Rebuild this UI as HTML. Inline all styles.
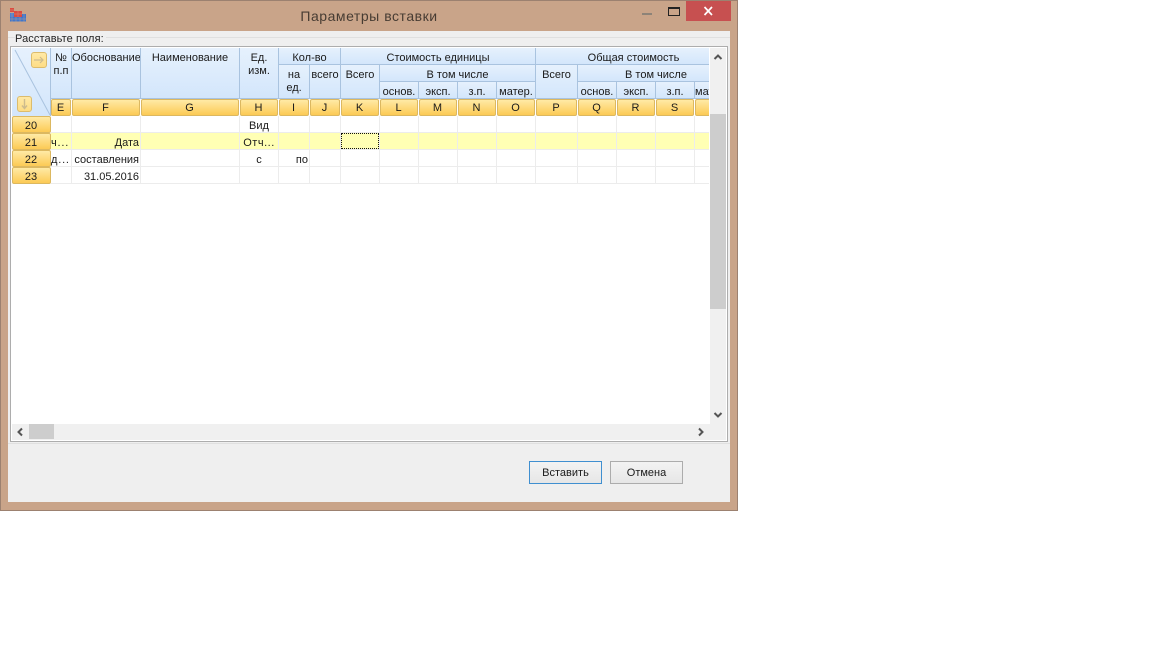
<!DOCTYPE html>
<html><head><meta charset="utf-8"><style>
html,body{margin:0;padding:0;background:#fff;width:1152px;height:648px;overflow:hidden}
body{position:relative;font-family:"Liberation Sans","DejaVu Sans",sans-serif;font-size:11px;color:#1a1a1a}
div{position:absolute;box-sizing:border-box}
.h{background:linear-gradient(#e6f1fd,#d3e6fb);border-right:1px solid #a9c3df;border-bottom:1px solid #a9c3df;text-align:center;line-height:13.500px;white-space:nowrap;overflow:hidden;padding-top:3.500px}
.l{top:99px;height:17px;padding-right:1px;background:linear-gradient(#ffeaa6,#fcca55);border:1px solid #dcb860;border-radius:2px;text-align:center;line-height:17px;overflow:hidden}
.r{left:12px;width:39px;height:17px;padding-right:1px;background:linear-gradient(#ffeaa6,#fcca55);border:1px solid #dcb860;border-radius:2px;text-align:center;line-height:18px}
.v{top:116px;width:1px;height:68px;background:#ececec}
.g{left:51px;width:658px;height:1px;background:#ececec}
.c{height:17px;line-height:20px;white-space:nowrap;overflow:hidden}
.b{top:461px;height:23px;text-align:center;line-height:23px;background:linear-gradient(#f3f3f3,#e6e6e6);border:1px solid #acacac}
.ab{background:linear-gradient(#ffe9a6,#fedd85);border:1px solid #dcbc6c;border-radius:3px}
</style></head><body>
<div style="left:0;top:0;width:738px;height:511px;background:#c9a489;border:1px solid #9c8170"></div>
<svg style="position:absolute;left:10px;top:8px" width="17" height="14"><path d="M0 0h4v4H0zM4 3h8v6H4z" fill="#dc4a40"/><path d="M0 5h4v4H0z" fill="#4d80d0"/><path d="M0 9h16v4.500H0zM12 6h4v3h-4z" fill="#3f76cc"/><path d="M0 2h4M4 6h8M8 3v6M2 5v8.500M6 9v4.500M10 9v4.500M14 6v7.500M0 11h16" stroke="#c9a489" stroke-width=".7" fill="none" opacity=".6"/></svg>
<div style="left:0;top:8px;width:738px;text-align:center;font-size:14px;letter-spacing:.53px;color:#473c33;line-height:16px">Параметры вставки</div>
<div style="left:642px;top:13px;width:10px;height:2px;background:#8d8378"></div>
<div style="left:668px;top:7px;width:12px;height:9px;border:1px solid #222;border-top-width:2px"></div>
<div style="left:686px;top:1px;width:45px;height:20px;background:#c75050"></div>
<svg style="position:absolute;left:703px;top:6px" width="11" height="10"><path d="M1.500 1l7.500 8M9 1L1.500 9" stroke="#fff" stroke-width="1.700" fill="none"/></svg>

<div style="left:8px;top:31px;width:722px;height:471px;background:#efefef"></div>
<div style="left:8px;top:37px;width:722px;height:1px;background:#e0e0e0"></div>
<div style="left:8px;top:443px;width:722px;height:1px;background:#e0e0e0"></div>
<div style="left:15px;top:33px;line-height:13px;background:#efefef;padding-right:2px;letter-spacing:.1px;color:#222">Расставьте поля:</div>
<div style="left:10px;top:46px;width:718px;height:396px;background:#fff;border:1px solid #adadad"></div>
<div style="left:12px;top:48px;width:714px;height:392px;background:#fff"></div>

<div style="left:12px;top:48px;width:39px;height:68px;background:linear-gradient(#e6f1fd,#d3e6fb);border-right:1px solid #a9c3df"></div>
<svg style="position:absolute;left:12px;top:48px" width="40" height="68"><path d="M3 2L38 67" stroke="#a9c3df" fill="none"/></svg>
<div class="ab" style="left:31px;top:52px;width:16px;height:16px"></div>
<svg style="position:absolute;left:31px;top:52px" width="16" height="16"><path d="M3 8h9M9 5l3 3-3 3" stroke="#cdbb8e" stroke-width="1.200" fill="none"/></svg>
<div class="ab" style="left:17px;top:96px;width:15px;height:16px"></div>
<svg style="position:absolute;left:17px;top:96px" width="15" height="16"><path d="M7.500 3v9M5 9.500l2.500 3 2.500-3" stroke="#cdbb8e" stroke-width="1.400" fill="none"/></svg>

<div class="h" style="left:51px;top:48px;width:21px;height:51px">№<br>п.п</div>
<div class="h" style="left:72px;top:48px;width:69px;height:51px">Обоснование</div>
<div class="h" style="left:141px;top:48px;width:99px;height:51px">Наименование</div>
<div class="h" style="left:240px;top:48px;width:39px;height:51px">Ед.<br>изм.</div>
<div class="h" style="left:279px;top:48px;width:62px;height:17px">Кол-во</div>
<div class="h" style="left:279px;top:65px;width:31px;height:34px">на<br>ед.</div>
<div class="h" style="left:310px;top:65px;width:31px;height:34px">всего</div>
<div class="h" style="left:341px;top:48px;width:195px;height:17px">Стоимость единицы</div>
<div class="h" style="left:341px;top:65px;width:39px;height:34px">Всего</div>
<div class="h" style="left:380px;top:65px;width:156px;height:17px">В том числе</div>
<div class="h" style="left:380px;top:82px;width:39px;height:17px">основ.</div>
<div class="h" style="left:419px;top:82px;width:39px;height:17px">эксп.</div>
<div class="h" style="left:458px;top:82px;width:39px;height:17px">з.п.</div>
<div class="h" style="left:497px;top:82px;width:39px;height:17px">матер.</div>
<div class="h" style="left:536px;top:48px;width:173px;height:17px;border-right:0;padding-left:22px">Общая стоимость</div>
<div class="h" style="left:536px;top:65px;width:42px;height:34px">Всего</div>
<div class="h" style="left:578px;top:65px;width:131px;height:17px;border-right:0;padding-left:25px">В том числе</div>
<div class="h" style="left:578px;top:82px;width:39px;height:17px">основ.</div>
<div class="h" style="left:617px;top:82px;width:39px;height:17px">эксп.</div>
<div class="h" style="left:656px;top:82px;width:39px;height:17px">з.п.</div>
<div class="h" style="left:695px;top:82px;width:14px;height:17px;border-right:0;text-align:left">матер.</div>

<div class="l" style="left:51px;width:20px">E</div>
<div class="l" style="left:72px;width:68px">F</div>
<div class="l" style="left:141px;width:98px">G</div>
<div class="l" style="left:240px;width:38px">H</div>
<div class="l" style="left:279px;width:30px">I</div>
<div class="l" style="left:310px;width:30px">J</div>
<div class="l" style="left:341px;width:38px">K</div>
<div class="l" style="left:380px;width:38px">L</div>
<div class="l" style="left:419px;width:38px">M</div>
<div class="l" style="left:458px;width:38px">N</div>
<div class="l" style="left:497px;width:38px">O</div>
<div class="l" style="left:536px;width:41px">P</div>
<div class="l" style="left:578px;width:38px">Q</div>
<div class="l" style="left:617px;width:38px">R</div>
<div class="l" style="left:656px;width:38px">S</div>
<div class="l" style="left:695px;width:14px;border-right:0;border-radius:2px 0 0 2px"></div>

<div class="r" style="top:116px">20</div>
<div class="r" style="top:133px">21</div>
<div class="r" style="top:150px">22</div>
<div class="r" style="top:167px">23</div>

<div style="left:51px;top:133px;width:658px;height:17px;background:#ffffb4"></div>
<div class="g" style="top:132px"></div><div class="g" style="top:149px"></div><div class="g" style="top:166px"></div><div class="g" style="top:183px"></div>
<div class="v" style="left:71px"></div><div class="v" style="left:140px"></div><div class="v" style="left:239px"></div><div class="v" style="left:278px"></div><div class="v" style="left:309px"></div><div class="v" style="left:340px"></div><div class="v" style="left:379px"></div><div class="v" style="left:418px"></div><div class="v" style="left:457px"></div><div class="v" style="left:496px"></div><div class="v" style="left:535px"></div><div class="v" style="left:577px"></div><div class="v" style="left:616px"></div><div class="v" style="left:655px"></div><div class="v" style="left:694px"></div>

<div class="c" style="left:240px;top:116px;width:38px;text-align:center">Вид</div>
<div class="c" style="left:51px;top:133px;width:20px;letter-spacing:.8px">ч...</div>
<div class="c" style="left:72px;top:133px;width:67px;text-align:right">Дата</div>
<div class="c" style="left:240px;top:133px;width:38px;text-align:center;letter-spacing:.5px">Отч...</div>
<div class="c" style="left:51px;top:150px;width:20px;letter-spacing:.8px">д...</div>
<div class="c" style="left:72px;top:150px;width:67px;text-align:right">составления</div>
<div class="c" style="left:240px;top:150px;width:38px;text-align:center">с</div>
<div class="c" style="left:279px;top:150px;width:29px;text-align:right">по</div>
<div class="c" style="left:72px;top:167px;width:67px;text-align:right">31.05.2016</div>
<div style="left:341px;top:133px;width:38px;height:16px;border:1px dotted #111"></div>

<div style="left:710px;top:48px;width:16px;height:376px;background:#f0f0f0"></div>
<div style="left:710px;top:114px;width:16px;height:195px;background:#cdcdcd"></div>
<svg style="position:absolute;left:713px;top:53px" width="10" height="8"><path d="M1.500 6L5 2.500 8.500 6" stroke="#555" stroke-width="2" fill="none"/></svg>
<svg style="position:absolute;left:713px;top:411px" width="10" height="8"><path d="M1.500 2L5 5.500 8.500 2" stroke="#555" stroke-width="2" fill="none"/></svg>
<div style="left:12px;top:424px;width:714px;height:16px;background:#f0f0f0"></div>
<div style="left:29px;top:424px;width:25px;height:15px;background:#cdcdcd"></div>
<svg style="position:absolute;left:16px;top:427px" width="8" height="10"><path d="M6 1.500L2.500 5 6 8.500" stroke="#555" stroke-width="2" fill="none"/></svg>
<svg style="position:absolute;left:697px;top:427px" width="8" height="10"><path d="M2 1.500L5.500 5 2 8.500" stroke="#555" stroke-width="2" fill="none"/></svg>

<div class="b" style="left:529px;width:73px;border-color:#3f8fd0">Вставить</div>
<div class="b" style="left:610px;width:73px">Отмена</div>
</body></html>
